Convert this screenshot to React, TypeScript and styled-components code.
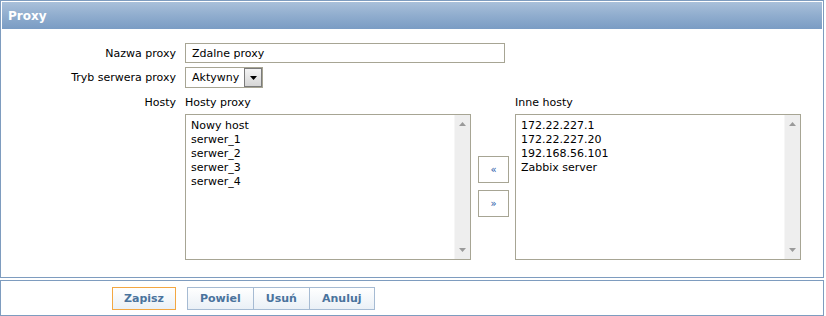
import React from 'react';
import styled, { createGlobalStyle } from 'styled-components';

const GlobalStyle = createGlobalStyle`
  body {
    margin: 0;
    background: #ffffff;
    font-family: Tahoma, "DejaVu Sans", Verdana, sans-serif;
    font-size: 11px;
    color: #000000;
  }
  * {
    box-sizing: border-box;
  }
`;

const Page = styled.div`
  width: 826px;
  height: 316px;
  display: flex;
  flex-direction: column;
  gap: 2px;
`;

const Panel = styled.div`
  width: 824px;
  border: 1px solid #7e9cbf;
  background: #ffffff;
`;

const FormPanel = styled(Panel)`
  height: 278px;
`;

const Header = styled.div`
  margin: 1px;
  height: 27px;
  display: flex;
  align-items: center;
  padding-left: 6px;
  background: linear-gradient(to bottom, #a9c0da 0%, #90adce 50%, #7a9cc4 100%);
  color: #ffffff;
  font-weight: bold;
  font-size: 12px;
`;

const Form = styled.div`
  display: grid;
  grid-template-columns: 175px 1fr;
  column-gap: 9px;
  padding-top: 13px;
`;

const Label = styled.div<{ $top?: number }>`
  text-align: right;
  padding-top: ${(p) => p.$top ?? 4}px;
`;

const Field = styled.div`
  display: flex;
  margin-bottom: 4px;
`;

const TextInput = styled.div`
  width: 320px;
  height: 20px;
  border: 1px solid #a7a594;
  padding-left: 6px;
  display: flex;
  align-items: center;
`;

const Select = styled.div`
  width: 78px;
  height: 21px;
  border: 1px solid #a7a594;
  display: flex;
  align-items: center;
  justify-content: space-between;
  padding-left: 6px;
`;

const DropButton = styled.div`
  width: 18px;
  height: 19px;
  border: 1px solid #7b7b7b;
  background: linear-gradient(to bottom, #f4f4f4, #d6d6d6);
  display: flex;
  align-items: center;
  justify-content: center;
`;

const Transfer = styled.div`
  display: flex;
  align-items: flex-start;
  padding-top: 4px;
`;

const Column = styled.div`
  display: flex;
  flex-direction: column;
  gap: 5px;
`;

const ListBox = styled.div`
  width: 286px;
  height: 146px;
  border: 1px solid #a7a594;
  display: flex;
`;

const ListItems = styled.div`
  flex: 1;
  padding: 4px 5px;
  line-height: 14px;
`;

const Scrollbar = styled.div`
  width: 16px;
  background: #eeeeee;
  border-left: 1px solid #f6f6f6;
  display: flex;
  flex-direction: column;
  justify-content: space-between;
  align-items: center;
  padding: 7px 0;
`;

const Arrows = styled.div`
  width: 44px;
  display: flex;
  flex-direction: column;
  align-items: flex-start;
  gap: 7px;
  padding: 60px 0 0 7px;
`;

const MoveButton = styled.div`
  width: 31px;
  height: 27px;
  border: 1px solid #a7a594;
  display: flex;
  align-items: center;
  justify-content: center;
  color: #1f57a8;
  font-size: 10px;
`;

const FooterPanel = styled(Panel)`
  height: 36px;
  display: flex;
  align-items: center;
  padding-left: 111px;
`;

const Button = styled.div<{ $primary?: boolean }>`
  height: 23px;
  padding: 0 ${(p) => (p.$primary ? 11 : 12)}px;
  border: 1px solid ${(p) => (p.$primary ? '#f3a742' : '#a6bbd3')};
  background: linear-gradient(to bottom, #ffffff, #eaf0f6);
  display: flex;
  align-items: center;
  color: #4a739d;
  font-weight: bold;
  & + & {
    margin-left: -1px;
  }
`;

const Group = styled.div`
  display: flex;
  margin-left: 11px;
`;

function Tri({ up, color = '#9a9a9a' }: { up?: boolean; color?: string }) {
  return (
    <svg width="7" height="4" viewBox="0 0 7 4">
      <path d={up ? 'M0 4 L3.5 0 L7 4 Z' : 'M0 0 L7 0 L3.5 4 Z'} fill={color} />
    </svg>
  );
}

function List({ items }: { items: string[] }) {
  return (
    <ListBox>
      <ListItems>
        {items.map((i) => (
          <div key={i}>{i}</div>
        ))}
      </ListItems>
      <Scrollbar>
        <Tri up />
        <Tri />
      </Scrollbar>
    </ListBox>
  );
}

export default function App() {
  return (
    <Page>
      <GlobalStyle />
      <FormPanel>
        <Header>Proxy</Header>
        <Form>
          <Label>Nazwa proxy</Label>
          <Field>
            <TextInput>Zdalne proxy</TextInput>
          </Field>
          <Label>Tryb serwera proxy</Label>
          <Field>
            <Select>
              Aktywny
              <DropButton>
                <Tri color="#000000" />
              </DropButton>
            </Select>
          </Field>
          <Label>Hosty</Label>
          <Transfer>
            <Column>
              <span>Hosty proxy</span>
              <List items={['Nowy host', 'serwer_1', 'serwer_2', 'serwer_3', 'serwer_4']} />
            </Column>
            <Arrows>
              <MoveButton>«</MoveButton>
              <MoveButton>»</MoveButton>
            </Arrows>
            <Column>
              <span>Inne hosty</span>
              <List items={['172.22.227.1', '172.22.227.20', '192.168.56.101', 'Zabbix server']} />
            </Column>
          </Transfer>
        </Form>
      </FormPanel>
      <FooterPanel>
        <Button $primary>Zapisz</Button>
        <Group>
          <Button>Powiel</Button>
          <Button>Usuń</Button>
          <Button>Anuluj</Button>
        </Group>
      </FooterPanel>
    </Page>
  );
}
